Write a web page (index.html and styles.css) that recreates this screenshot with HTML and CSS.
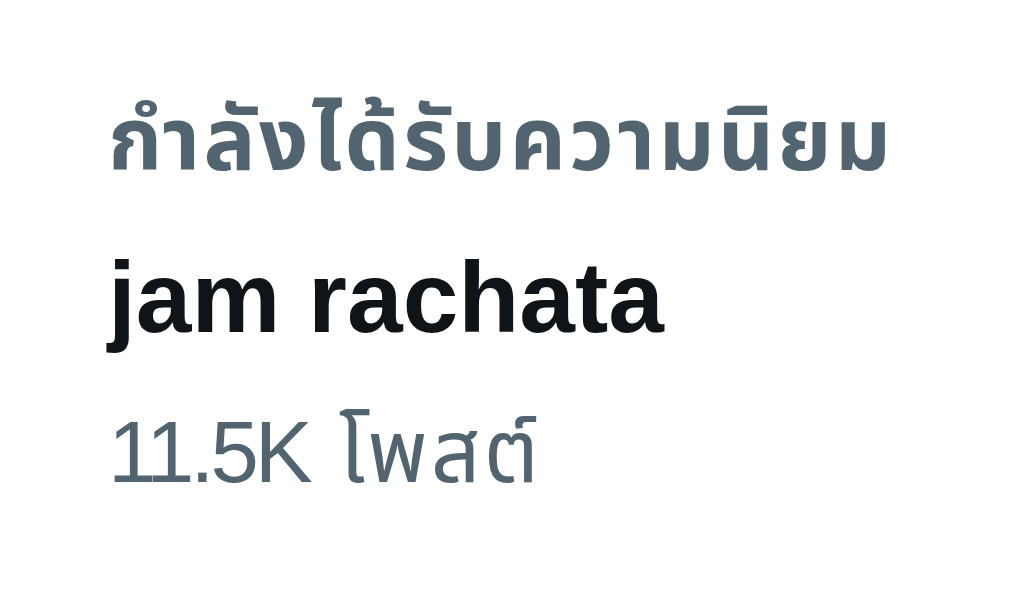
FILE: index.html
```html
<!DOCTYPE html>
<html lang="th">
<head>
    <meta charset="UTF-8">
    <meta name="viewport" content="width=device-width, initial-scale=1.0">
    <title>กำลังได้รับความนิยม</title>
    <link rel="stylesheet" href="styles.css">
</head>
<body>
    <div class="trend">
        <div class="trend-context">กำลังได้รับความนิยม</div>
        <div class="trend-name">jam rachata</div>
        <div class="trend-count"><span class="trend-num">11.5K</span> <span class="trend-unit">โพสต์</span></div>
    </div>
</body>
</html>
```

FILE: styles.css
```css
body {
    margin: 0;
    background: #ffffff;
    font-family: "Liberation Sans", "Noto Sans Thai", "Noto Sans", sans-serif;
}
.trend {
    padding: 80px 0 0 108px;
}
.trend-context {
    color: #536471;
    font-size: 87px;
    font-weight: bold;
    line-height: 120px;
    letter-spacing: 3.3px;
}
.trend-name {
    color: #0f1419;
    font-size: 100px;
    font-weight: bold;
    line-height: 160px;
    margin-top: 17px;
}
.trend-count {
    color: #536471;
    font-size: 87px;
    line-height: 150px;
}
.trend-num {
    letter-spacing: -4px;
}
.trend-unit {
    margin-left: 6px;
    letter-spacing: 3px;
}
```
